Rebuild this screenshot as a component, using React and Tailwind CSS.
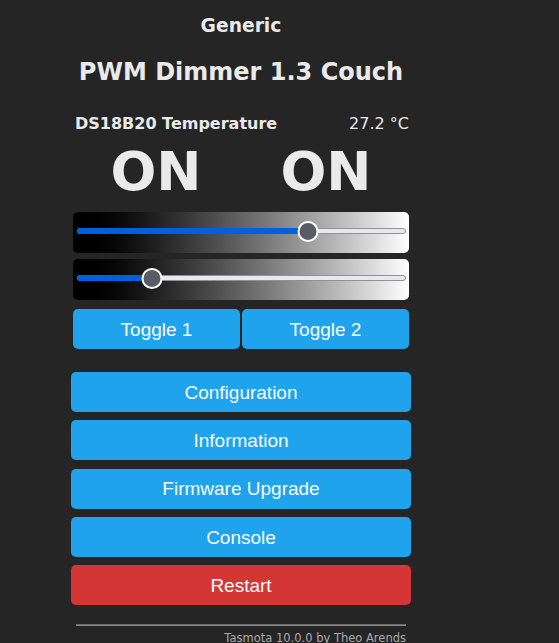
const btnFont = { fontFamily: '"Liberation Sans", Arial, sans-serif' };

function Slider({ pos }) {
  // pos = thumb center in px along the track
  return (
    <div className="relative h-[41px] rounded-[5px] bg-gradient-to-r from-black to-white">
      <div className="absolute left-[4px] right-[3px] top-[16px] h-[6px] rounded-full border border-[#8f8f9d] bg-[#e9e9ed]" />
      <div
        className="absolute left-[4px] top-[16px] h-[6px] rounded-full bg-[#0060df]"
        style={{ width: pos }}
      />
      <div
        className="absolute top-[9px] h-[21px] w-[21px] -translate-x-1/2 rounded-full border-2 border-white bg-[#5b5b66]"
        style={{ left: pos + 4 }}
      />
    </div>
  );
}

function Btn({ label, red }) {
  return (
    <button
      style={btnFont}
      className={`h-[40px] w-full rounded-[5px] pt-[2px] text-[19px] text-[#faffff] ${red ? 'bg-[#d43535]' : 'bg-[#1fa3ec]'}`}
    >
      {label}
    </button>
  );
}

export default function App() {
  return (
    <div
      className="h-[643px] overflow-hidden bg-[#252525] text-[#eaeaea]"
      style={{ fontFamily: '"DejaVu Sans", Verdana, sans-serif' }}
    >
      <div className="ml-[71px] w-[340px]">
        <div className="pt-[15px] text-center">
          <h3 className="h-[22px] text-[18.72px] font-bold leading-[22px]">Generic</h3>
          <h2 className="mt-[21px] h-[28px] text-[24px] font-bold leading-[28px]">PWM Dimmer 1.3 Couch</h2>
        </div>

        <div className="mt-[28px] flex h-[20px] items-center justify-between pl-[4px] pr-[2px] text-[16px] leading-[20px]">
          <span className="font-bold">DS18B20 Temperature</span>
          <span>27.2 °C</span>
        </div>

        <div className="mt-[11px] flex text-[54px] font-bold leading-[54px]">
          <div className="w-1/2 text-center">ON</div>
          <div className="w-1/2 text-center">ON</div>
        </div>

        <div className="mt-[13px] flex flex-col gap-[6px] px-[2px]">
          <Slider pos={231} />
          <Slider pos={75} />
        </div>

        <div className="mt-[9px] flex gap-[2px] px-[2px]">
          <Btn label="Toggle 1" />
          <Btn label="Toggle 2" />
        </div>

        <div className="mt-[23px] flex flex-col gap-[8.25px]">
          <Btn label="Configuration" />
          <Btn label="Information" />
          <Btn label="Firmware Upgrade" />
          <Btn label="Console" />
          <Btn label="Restart" red />
        </div>

        <div className="mx-[5px] mt-[19px] text-right text-[11.5px]">
          <div className="h-[2px] border-t border-[#6a6a6a] border-b border-b-[#8a8a8a]" />
          <div className="mt-[6px] leading-[13px] text-[#aaa]">Tasmota 10.0.0 by Theo Arends</div>
        </div>
      </div>
    </div>
  );
}
